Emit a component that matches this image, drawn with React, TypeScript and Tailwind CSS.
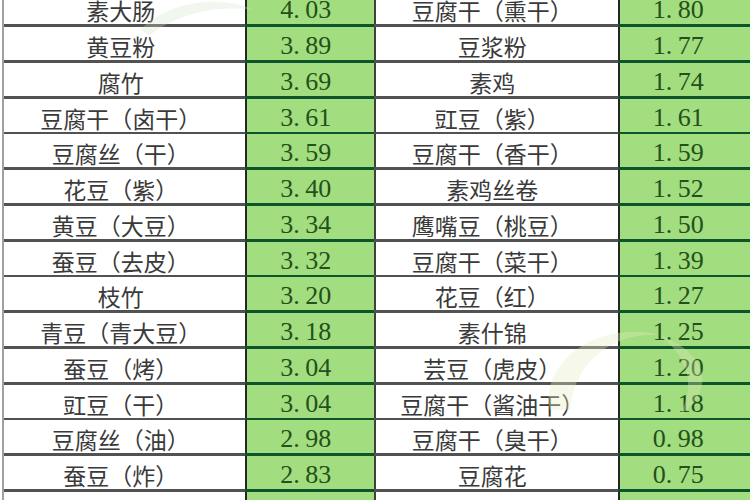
import React from 'react';

type Row = [string, string, string, string];

const rows: Row[] = [
  ['素大肠', '4.03', '豆腐干（熏干）', '1.80'],
  ['黄豆粉', '3.89', '豆浆粉', '1.77'],
  ['腐竹', '3.69', '素鸡', '1.74'],
  ['豆腐干（卤干）', '3.61', '豇豆（紫）', '1.61'],
  ['豆腐丝（干）', '3.59', '豆腐干（香干）', '1.59'],
  ['花豆（紫）', '3.40', '素鸡丝卷', '1.52'],
  ['黄豆（大豆）', '3.34', '鹰嘴豆（桃豆）', '1.50'],
  ['蚕豆（去皮）', '3.32', '豆腐干（菜干）', '1.39'],
  ['枝竹', '3.20', '花豆（红）', '1.27'],
  ['青豆（青大豆）', '3.18', '素什锦', '1.25'],
  ['蚕豆（烤）', '3.04', '芸豆（虎皮）', '1.20'],
  ['豇豆（干）', '3.04', '豆腐干（酱油干）', '1.18'],
  ['豆腐丝（油）', '2.98', '豆腐干（臭干）', '0.98'],
  ['蚕豆（炸）', '2.83', '豆腐花', '0.75'],
  ['', '', '', ''],
];

const cjk = { fontFamily: '"Noto Sans CJK SC", "Noto Sans", sans-serif' };
const num = { fontFamily: '"Liberation Serif", "Noto Sans CJK SC", serif' };

const Value: React.FC<{ v: string }> = ({ v }) => {
  if (!v) return null;
  const [a, b] = v.split('.');
  return (
    <span style={num} className="text-[26px] text-[#24501a] leading-none">
      {a}
      <span className="inline-block w-[12px] text-left">.</span>
      {b}
    </span>
  );
};

const App: React.FC = () => {
  return (
    <div className="relative w-[750px] h-[500px] overflow-hidden bg-white">
      <div className="flex flex-col -mt-[9px] ml-[2px] border-l-2 border-l-neutral-400">
        {rows.map((r, i) => (
          <div key={i} className="flex flex-col">
            <div className="flex h-[33px]">
              <div
                style={cjk}
                className="flex w-[242px] items-center justify-center pt-[5px] pr-[8px] text-[23px] text-[#3a3a3a] leading-none"
              >
                {r[0]}
              </div>
              <div className="flex w-[129px] items-center justify-center pt-[5px] pr-[10px] bg-[#a2dd7f] border-l-2 border-l-neutral-800">
                <Value v={r[1]} />
              </div>
              <div
                style={cjk}
                className="flex w-[245px] items-center justify-center pt-[5px] pr-[10px] border-l-2 border-l-neutral-700 text-[23px] text-[#3a3a3a] leading-none"
              >
                {r[2]}
              </div>
              <div className="flex w-[132px] items-center justify-center pt-[5px] pr-[14px] bg-[#a2dd7f] border-l-2 border-l-neutral-800">
                <Value v={r[3]} />
              </div>
            </div>
            <div className={`flex ${i % 4 === 3 ? 'h-[2px]' : 'h-[3px]'}`}>
              <div className="w-[242px] bg-neutral-600" />
              <div className="w-[129px] bg-green-900" />
              <div className="w-[245px] bg-neutral-600" />
              <div className="w-[132px] bg-green-900" />
            </div>
          </div>
        ))}
      </div>

      {/* faint watermark marks */}
      <svg className="absolute left-[130px] top-0 pointer-events-none" width="130" height="40" viewBox="0 0 130 40">
        <path d="M10 30 C 40 0, 90 -5, 125 10 C 90 5, 50 12, 20 35 Z" fill="#cfe6c6" opacity="0.3" />
      </svg>
      <svg className="absolute left-[530px] top-[310px] pointer-events-none" width="200" height="110" viewBox="0 0 200 110">
        <path d="M20 100 C 10 50, 70 10, 130 25 C 90 22, 45 45, 40 100 Z" fill="#e6ecc0" opacity="0.35" />
        <path d="M130 25 C 180 45, 185 80, 150 105 C 165 75, 160 50, 130 25 Z" fill="#dfe8b8" opacity="0.35" />
      </svg>
    </div>
  );
};

export default App;
